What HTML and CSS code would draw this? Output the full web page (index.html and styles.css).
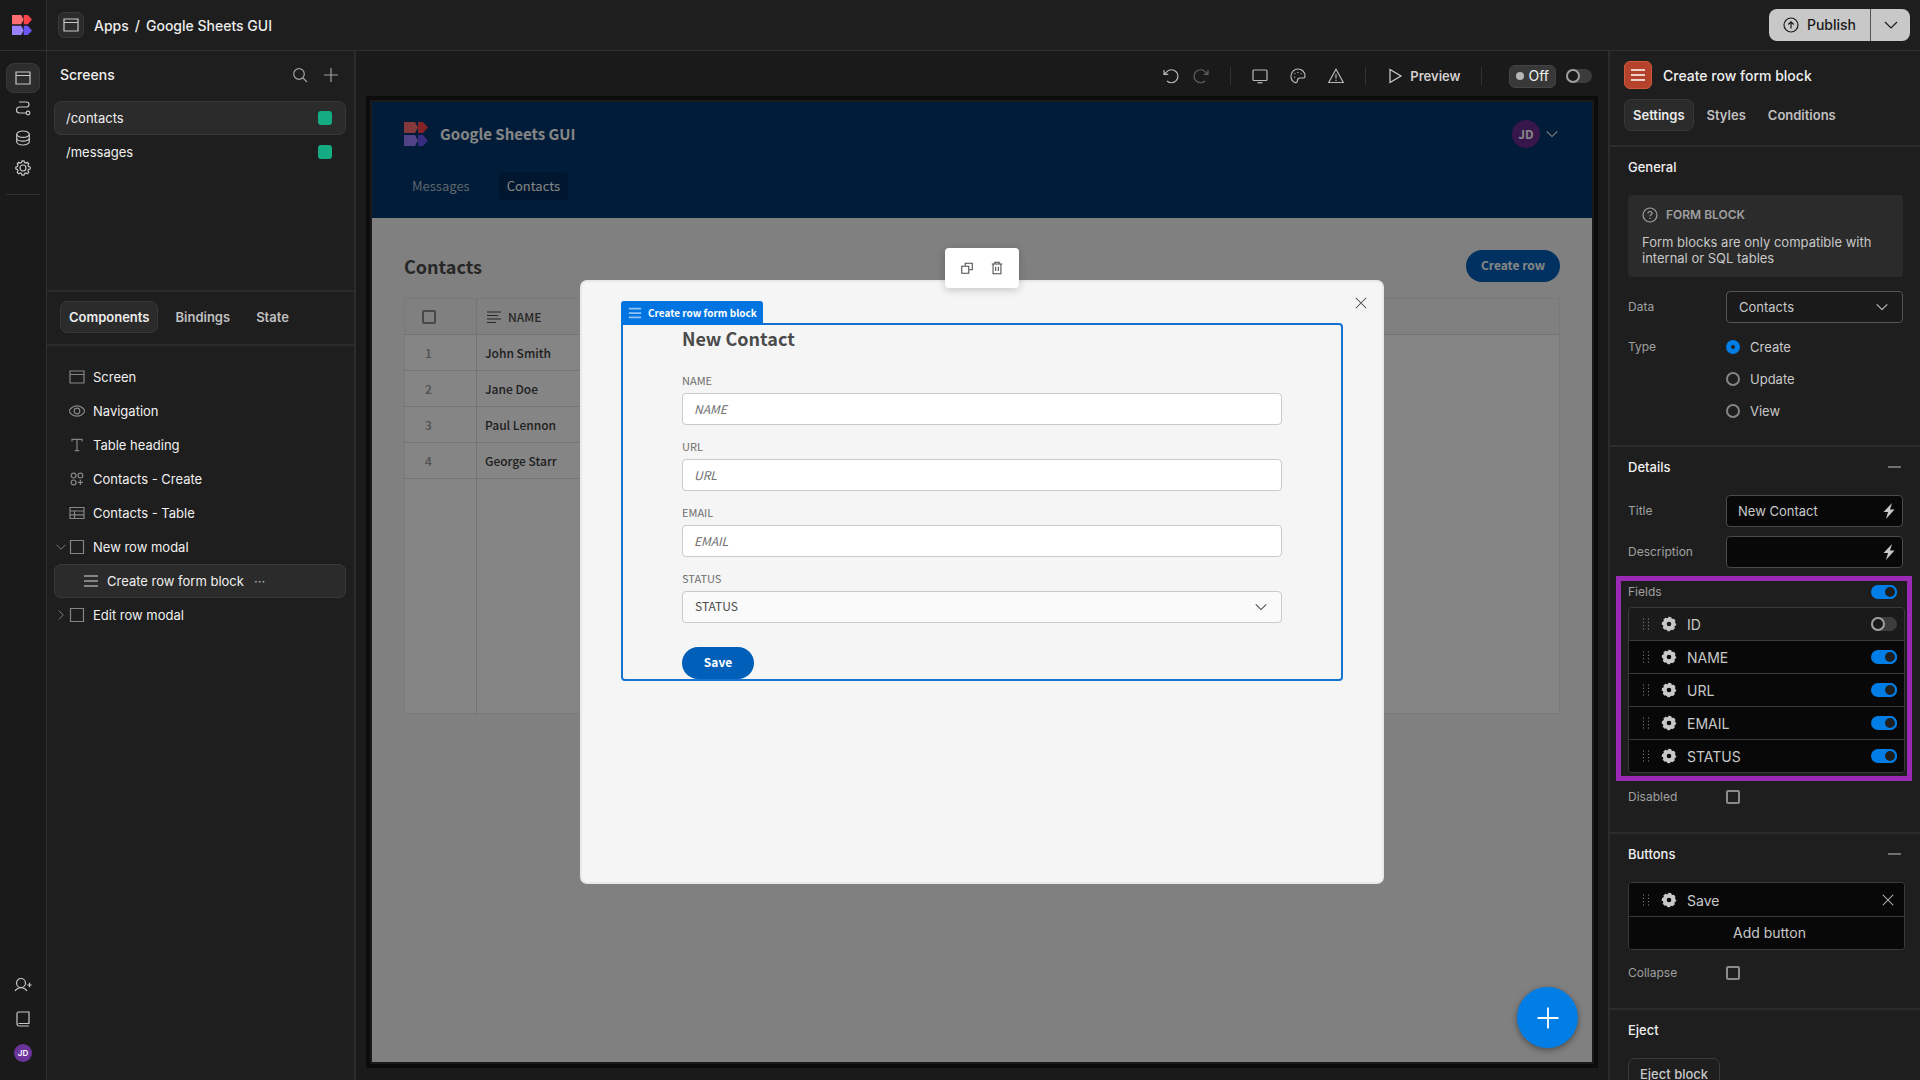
FILE: index.html
```html
<!DOCTYPE html>
<html lang="en">
<head>
<meta charset="utf-8">
<title>Google Sheets GUI - Builder</title>
<link rel="stylesheet" href="styles.css">
</head>
<body>
<svg class="sprite" aria-hidden="true">
  <symbol id="i-logo" viewBox="0 0 24 24">
    <path d="M0 0h11l3 5.500-3 5.500H0z" fill="#ff6d70"/><path d="M14 0h5l5 5.500-5 5.500h-5z" fill="#ff4149"/>
    <path d="M0 13h11l3 5.500-3 5.500H0z" fill="#9981ff"/><path d="M14 13h5l5 5.500-5 5.500h-5z" fill="#6a55f5"/>
  </symbol>
  <symbol id="i-screen" viewBox="0 0 16 16"><path d="M1 2h14v12H1zM1 5.500h14"/></symbol>
  <symbol id="i-flow" viewBox="0 0 16 16"><path d="M4 2h7.500a2.500 2.500 0 0 1 0 5h-7a3 3 0 0 0 0 6h6.500"/><circle cx="13" cy="13" r="1.800"/></symbol>
  <symbol id="i-data" viewBox="0 0 16 16"><ellipse cx="8" cy="4.200" rx="6.300" ry="3.200"/><path d="M1.700 4.200v7.600c0 1.800 2.800 3.200 6.300 3.200s6.300-1.400 6.300-3.200V4.200M1.700 8c0 1.800 2.800 3.200 6.300 3.200s6.300-1.400 6.300-3.200"/></symbol>
  <symbol id="i-gear" viewBox="0 0 16 16"><path d="M6.500 2.600 7 .9h2l.5 1.700 1.300.5 1.500-.8 1.500 1.500-.8 1.500.5 1.300 1.600.4v2l-1.600.5-.5 1.300.8 1.500-1.500 1.500-1.500-.8-1.300.5L9 15.100H7l-.5-1.600-1.300-.5-1.500.8-1.500-1.500.8-1.500-.5-1.300L.9 9V7l1.600-.4L3 5.300l-.8-1.500 1.500-1.500 1.500.8z"/><circle cx="8" cy="8" r="3"/></symbol>
  <symbol id="i-user" viewBox="0 0 18 16"><circle cx="7" cy="6" r="4.500"/><path d="M1 14c1.500-2.200 3.500-3.400 6-3.400s4.500 1.200 6 3.400M15.500 5.800v4.400M13.300 8h4.400"/></symbol>
  <symbol id="i-book" viewBox="0 0 16 16"><path d="M14 15H4a2 2 0 0 1-2-2V2.500C2 1.700 2.700 1 3.500 1H14v11.500H3.500"/></symbol>
  <symbol id="i-search" viewBox="0 0 16 16"><circle cx="7" cy="7" r="5.300"/><path d="m11 11 4 4"/></symbol>
  <symbol id="i-plus" viewBox="0 0 16 16"><path d="M8 1v14M1 8h14"/></symbol>
  <symbol id="i-eye" viewBox="0 0 16 16"><path d="M0 8c2-3.500 4.700-5.200 8-5.200S14 4.500 16 8c-2 3.500-4.700 5.200-8 5.200S2 11.500 0 8z"/><circle cx="8" cy="8" r="2.800"/></symbol>
  <symbol id="i-text" viewBox="0 0 16 16"><path d="M3 4.500V2.300h10v2.200M8 2.300v11.400M5.700 13.700h4.600"/></symbol>
  <symbol id="i-blocks" viewBox="0 0 16 16"><circle cx="4.600" cy="4.600" r="2.400"/><circle cx="11.400" cy="4.600" r="2.400"/><circle cx="4.600" cy="11.400" r="2.400"/><path d="M11.400 8.800v5.200M8.800 11.400H14"/></symbol>
  <symbol id="i-table" viewBox="0 0 16 16"><path d="M1 2.500h14v11H1zM1 6h14M1 9.800h14M5.500 6v7.500"/></symbol>
  <symbol id="i-square" viewBox="0 0 16 16"><path d="M1.500 1.500h13v13h-13z"/></symbol>
  <symbol id="i-down" viewBox="0 0 16 16"><path d="m2 5 6 6 6-6"/></symbol>
  <symbol id="i-right" viewBox="0 0 16 16"><path d="m5 2 6 6-6 6"/></symbol>
  <symbol id="i-lines" viewBox="0 0 16 16"><path d="M1 3h14M1 8h14M1 13h14"/></symbol>
  <symbol id="i-align" viewBox="0 0 16 16"><path d="M1 3h14M1 6.500h11M1 10h14M1 13.500h9"/></symbol>
  <symbol id="i-undo" viewBox="0 0 16 16"><path d="M1 2v4.300h4.300M1.500 6l2.200-2.200A6.500 6.500 0 1 1 4 13"/></symbol>
  <symbol id="i-redo" viewBox="0 0 16 16"><path d="M15 2v4.300h-4.300M14.500 6l-2.200-2.200A6.500 6.500 0 1 0 12 13"/></symbol>
  <symbol id="i-monitor" viewBox="0 0 16 16"><rect x="1" y="2" width="14" height="10.500" rx="1"/><path d="M5.500 14.700h5"/></symbol>
  <symbol id="i-palette" viewBox="0 0 16 16"><path d="M8 1a7 7 0 0 0-7 7c0 3.300 2 5.800 4.300 6.600 1.300.4 2-.5 2-1.500 0-1.900.7-3.100 2.600-3.100h3c1.300 0 2.100-.8 2.100-2.100C15 4 11.900 1 8 1z"/><path d="M8 3.900v1M4.500 5.600l.8.500M11.500 5.600l-.8.500M4.200 9.400h1"/></symbol>
  <symbol id="i-warn" viewBox="0 0 16 16"><path d="M8 1.300 15.300 14.500H.7zM8 6v4.500M8 11.800v1.200"/></symbol>
  <symbol id="i-play" viewBox="0 0 16 16"><path d="M3 1.500 14 8 3 14.500z"/></symbol>
  <symbol id="i-up" viewBox="0 0 16 16"><circle cx="8" cy="8" r="7"/><path d="M8 11.500V5M5.300 7.500 8 4.800l2.700 2.700"/></symbol>
  <symbol id="i-help" viewBox="0 0 16 16"><circle cx="8" cy="8" r="7"/><path d="M6 6.500C6 5.300 6.900 4.500 8 4.500s2 .8 2 1.800c0 1.300-2 1.500-2 3M8 10.800v1.200"/></symbol>
  <symbol id="i-close" viewBox="0 0 16 16"><path d="m2 2 12 12M14 2 2 14"/></symbol>
  <symbol id="i-copy" viewBox="0 0 16 16"><path d="M2 6h8v8H2zM6 6V2.500h8V10h-4"/></symbol>
  <symbol id="i-trash" viewBox="0 0 16 16"><path d="M2 3.500h12M5.500 3.500v-2h5v2M3.500 3.500v11h9v-11M6.500 6.500v5M9.500 6.500v5"/></symbol>
  <symbol id="i-bolt" viewBox="0 0 16 16"><path d="M11 0 2.500 9H7l-2 7 8.500-9.500H9z" fill="currentColor" stroke="none"/></symbol>
  <symbol id="i-cog" viewBox="0 0 16 16"><circle cx="8" cy="8" r="4.300" stroke-width="4"/><circle cx="8" cy="8" r="6.200" stroke-width="2" stroke-dasharray="3 1.870" stroke-dashoffset="1.500"/></symbol>
  <symbol id="i-drag" viewBox="0 0 8 12"><path d="M1 1h1M6 1h1M1 4.300h1M6 4.300h1M1 7.700h1M6 7.700h1M1 11h1M6 11h1"/></symbol>
</svg>

<div class="app">
  <header class="topbar">
    <a class="topbar-logo" href="#" aria-label="Home"><svg class="logo-small"><use href="#i-logo"/></svg></a>
    <div class="topbar-main">
      <span class="crumb-icon"><svg class="icon"><use href="#i-screen"/></svg></span>
      <nav class="crumbs"><a href="#">Apps</a><span>/</span><a href="#">Google Sheets GUI</a></nav>
      <div class="publish">
        <button class="publish-main"><svg class="icon"><use href="#i-up"/></svg>Publish</button>
        <button class="publish-more" aria-label="Publish options"><svg class="icon"><use href="#i-down"/></svg></button>
      </div>
    </div>
  </header>

  <div class="workspace">
    <nav class="rail">
      <button class="rail-item active" aria-label="Design"><svg class="icon"><use href="#i-screen"/></svg></button>
      <button class="rail-item" aria-label="Automations"><svg class="icon"><use href="#i-flow"/></svg></button>
      <button class="rail-item" aria-label="Data"><svg class="icon"><use href="#i-data"/></svg></button>
      <button class="rail-item" aria-label="Settings"><svg class="icon"><use href="#i-gear"/></svg></button>
      <hr class="rail-rule">
      <div class="rail-bottom">
        <button class="rail-item" aria-label="Invite users"><svg class="icon icon-wide"><use href="#i-user"/></svg></button>
        <button class="rail-item" aria-label="Docs"><svg class="icon"><use href="#i-book"/></svg></button>
        <button class="rail-item" aria-label="Account"><span class="rail-avatar">JD</span></button>
      </div>
    </nav>

    <aside class="left">
      <section class="screens">
        <div class="screens-head">
          <h2>Screens</h2>
          <button aria-label="Search"><svg class="icon"><use href="#i-search"/></svg></button>
          <button aria-label="Add screen"><svg class="icon"><use href="#i-plus"/></svg></button>
        </div>
        <a class="screen-row selected" href="#">/contacts<span class="swatch"></span></a>
        <a class="screen-row" href="#">/messages<span class="swatch"></span></a>
      </section>
      <div class="tabs left-tabs">
        <button class="tab active">Components</button>
        <button class="tab">Bindings</button>
        <button class="tab">State</button>
      </div>
      <ul class="tree">
        <li class="node"><span class="twist"></span><svg class="icon"><use href="#i-screen"/></svg>Screen</li>
        <li class="node"><span class="twist"></span><svg class="icon"><use href="#i-eye"/></svg>Navigation</li>
        <li class="node"><span class="twist"></span><svg class="icon"><use href="#i-text"/></svg>Table heading</li>
        <li class="node"><span class="twist"></span><svg class="icon"><use href="#i-blocks"/></svg>Contacts - Create</li>
        <li class="node"><span class="twist"></span><svg class="icon"><use href="#i-table"/></svg>Contacts - Table</li>
        <li class="node"><span class="twist"><svg class="icon icon-12"><use href="#i-down"/></svg></span><svg class="icon"><use href="#i-square"/></svg>New row modal</li>
        <li class="node child selected"><svg class="icon"><use href="#i-lines"/></svg>Create row form block<span class="more">···</span></li>
        <li class="node"><span class="twist"><svg class="icon icon-12"><use href="#i-right"/></svg></span><svg class="icon"><use href="#i-square"/></svg>Edit row modal</li>
      </ul>
    </aside>

    <main class="center">
      <div class="toolbar">
        <button class="tool" aria-label="Undo"><svg class="icon"><use href="#i-undo"/></svg></button>
        <button class="tool faint" aria-label="Redo"><svg class="icon"><use href="#i-redo"/></svg></button>
        <span class="tool-rule"></span>
        <div class="tool-group">
          <button class="tool" aria-label="Desktop"><svg class="icon"><use href="#i-monitor"/></svg></button>
          <button class="tool" aria-label="Theme"><svg class="icon"><use href="#i-palette"/></svg></button>
          <button class="tool" aria-label="Errors"><svg class="icon"><use href="#i-warn"/></svg></button>
        </div>
        <span class="tool-rule"></span>
        <button class="preview"><svg class="icon"><use href="#i-play"/></svg>Preview</button>
        <span class="tool-rule"></span>
        <label class="chip" for="assist"><span class="dot"></span>Off</label>
        <input class="switch" type="checkbox" role="switch" id="assist">
      </div>

      <div class="frame">
        <div class="page">
          <header class="site-head">
            <div class="site-top">
              <svg class="site-logo"><use href="#i-logo"/></svg>
              <h1>Google Sheets GUI</h1>
              <span class="site-user">JD</span>
              <svg class="icon icon-14"><use href="#i-down"/></svg>
            </div>
            <nav class="site-nav"><a href="#">Messages</a><a class="current" href="#">Contacts</a></nav>
          </header>
          <div class="site-body">
            <div class="list-head">
              <h2>Contacts</h2>
              <button class="pill">Create row</button>
            </div>
            <table class="grid">
              <thead>
                <tr><th class="col-num"><input class="tick" type="checkbox" aria-label="Select all"></th><th class="col-name"><span class="th-label"><svg class="icon"><use href="#i-align"/></svg>NAME</span></th><th></th></tr>
              </thead>
              <tbody>
                <tr><td class="num">1</td><td>John Smith</td><td></td></tr>
                <tr><td class="num">2</td><td>Jane Doe</td><td></td></tr>
                <tr><td class="num">3</td><td>Paul Lennon</td><td></td></tr>
                <tr><td class="num">4</td><td>George Starr</td><td></td></tr>
                <tr class="rest"><td></td><td></td><td></td></tr>
              </tbody>
            </table>
          </div>

          <div class="underlay">
            <div class="modal" role="dialog" aria-label="New row modal">
              <button class="modal-close" aria-label="Close"><svg class="icon icon-14"><use href="#i-close"/></svg></button>
              <form class="block">
                <span class="block-tag"><svg class="icon icon-14"><use href="#i-lines"/></svg>Create row form block</span>
                <h2>New Contact</h2>
                <label for="f-name">NAME</label>
                <input type="text" id="f-name" placeholder="NAME">
                <label for="f-url">URL</label>
                <input type="text" id="f-url" placeholder="URL">
                <label for="f-email">EMAIL</label>
                <input type="text" id="f-email" placeholder="EMAIL">
                <label for="f-status">STATUS</label>
                <span class="select"><select id="f-status"><option>STATUS</option></select><svg class="icon icon-14"><use href="#i-down"/></svg></span>
                <button class="pill save" type="button">Save</button>
              </form>
            </div>
          </div>
          <div class="float-tools">
            <button aria-label="Duplicate"><svg class="icon icon-14"><use href="#i-copy"/></svg></button>
            <button aria-label="Delete"><svg class="icon icon-14"><use href="#i-trash"/></svg></button>
          </div>
          <button class="fab" aria-label="Add component"><svg class="icon"><use href="#i-plus"/></svg></button>
        </div>
      </div>
    </main>

    <aside class="right">
      <div class="right-head">
        <div class="right-title"><span class="badge"><svg class="icon"><use href="#i-lines"/></svg></span><h2>Create row form block</h2></div>
        <div class="tabs right-tabs">
          <button class="tab active">Settings</button>
          <button class="tab">Styles</button>
          <button class="tab">Conditions</button>
        </div>
      </div>

      <section class="group">
        <h3>General</h3>
        <div class="note">
          <p class="note-title"><svg class="icon"><use href="#i-help"/></svg>FORM BLOCK</p>
          <p>Form blocks are only compatible with internal or SQL tables</p>
        </div>
        <div class="prop">
          <label for="p-data">Data</label>
          <span class="select"><select id="p-data"><option>Contacts</option></select><svg class="icon icon-14"><use href="#i-down"/></svg></span>
        </div>
        <div class="prop prop-top" role="radiogroup" aria-labelledby="p-type">
          <span id="p-type">Type</span>
          <div class="radios">
            <label><input type="radio" name="type" checked>Create</label>
            <label><input type="radio" name="type">Update</label>
            <label><input type="radio" name="type">View</label>
          </div>
        </div>
      </section>

      <section class="group">
        <h3>Details<span class="minus"></span></h3>
        <div class="prop">
          <label for="p-title">Title</label>
          <span class="binding"><input type="text" id="p-title" value="New Contact"><svg class="icon"><use href="#i-bolt"/></svg></span>
        </div>
        <div class="prop">
          <label for="p-desc">Description</label>
          <span class="binding"><input type="text" id="p-desc"><svg class="icon"><use href="#i-bolt"/></svg></span>
        </div>
        <div class="highlight">
          <div class="fields-head"><label for="s-all">Fields</label><input class="switch" type="checkbox" role="switch" id="s-all" checked></div>
          <ul class="items">
            <li class="off"><svg class="drag"><use href="#i-drag"/></svg><svg class="icon cog"><use href="#i-cog"/></svg><label for="s-id">ID</label><input class="switch" type="checkbox" role="switch" id="s-id"></li>
            <li><svg class="drag"><use href="#i-drag"/></svg><svg class="icon cog"><use href="#i-cog"/></svg><label for="s-name">NAME</label><input class="switch" type="checkbox" role="switch" id="s-name" checked></li>
            <li><svg class="drag"><use href="#i-drag"/></svg><svg class="icon cog"><use href="#i-cog"/></svg><label for="s-url">URL</label><input class="switch" type="checkbox" role="switch" id="s-url" checked></li>
            <li><svg class="drag"><use href="#i-drag"/></svg><svg class="icon cog"><use href="#i-cog"/></svg><label for="s-email">EMAIL</label><input class="switch" type="checkbox" role="switch" id="s-email" checked></li>
            <li><svg class="drag"><use href="#i-drag"/></svg><svg class="icon cog"><use href="#i-cog"/></svg><label for="s-status">STATUS</label><input class="switch" type="checkbox" role="switch" id="s-status" checked></li>
          </ul>
        </div>
        <div class="prop">
          <label for="p-disabled">Disabled</label>
          <input class="tick" type="checkbox" id="p-disabled">
        </div>
      </section>

      <section class="group">
        <h3>Buttons<span class="minus"></span></h3>
        <ul class="items button-items">
          <li><svg class="drag"><use href="#i-drag"/></svg><svg class="icon cog"><use href="#i-cog"/></svg><span class="item-name">Save</span><button class="remove" aria-label="Remove Save"><svg class="icon icon-14"><use href="#i-close"/></svg></button></li>
          <li><button class="add">Add button</button></li>
        </ul>
        <div class="prop">
          <label for="p-collapse">Collapse</label>
          <input class="tick" type="checkbox" id="p-collapse">
        </div>
      </section>

      <section class="group">
        <h3>Eject</h3>
        <button class="eject">Eject block</button>
      </section>
    </aside>
  </div>
</div>
</body>
</html>
```

FILE: styles.css
```css
*, *::before { box-sizing: border-box; }

body {
  margin: 0;
  background: #1a1a1a;
  color: #ececec;
  font: 400 13px/16px Inter, "Liberation Sans", sans-serif;
}

h1, h2, h3, p, ul { margin: 0; padding: 0; list-style: none; }
h1, h2, h3 { font-weight: 500; }
button, input, select { font: inherit; color: inherit; margin: 0; }
button { background: none; border: 0; padding: 0; display: flex; align-items: center; justify-content: center; }
a { color: inherit; text-decoration: none; }

.sprite { position: absolute; width: 0; height: 0; }
.icon { width: 16px; height: 16px; flex: none; fill: none; stroke: currentColor; stroke-width: 1.2; display: block; }
.icon-wide { width: 18px; }
.icon-14 { width: 14px; height: 14px; }
.icon-12 { width: 12px; height: 12px; }

.app { display: flex; flex-direction: column; height: 100vh; overflow: hidden; }

/* Top bar */
.topbar { display: flex; flex: none; height: 51px; background: #1e1e1e; border-bottom: 1px solid #303030; }
.topbar-logo { width: 47px; display: flex; align-items: center; padding-left: 12px; border-right: 1px solid #303030; background: #1a1a1a; }
.logo-small { width: 20px; height: 20px; }
.topbar-main { flex: 1; display: flex; align-items: center; padding: 0 10px 0 11px; }
.crumb-icon { width: 26px; height: 26px; display: grid; place-items: center; background: #2b2b2b; border: 1px solid #383838; border-radius: 6px; color: #c8c8c8; }
.crumbs { display: flex; gap: 6px; margin-left: 10px; padding-top: 2px; font-size: 14px; font-weight: 500; }
.publish { display: flex; margin-left: auto; color: #1a1a1a; font-size: 14px; font-weight: 500; }
.publish-main { height: 32px; padding: 0 14px; gap: 8px; background: #c8c8c8; border-radius: 8px 0 0 8px; border-right: 1px solid #555; }
.publish-more { width: 39px; height: 32px; background: #c8c8c8; border-radius: 0 8px 8px 0; }

.workspace { flex: 1; display: flex; min-height: 0; }

/* Icon rail */
.rail { width: 47px; flex: none; display: flex; flex-direction: column; align-items: center; padding: 12px 0 10px; background: #1a1a1a; border-right: 1px solid #303030; color: #c8c8c8; }
.rail-item { width: 34px; height: 30px; border: 1px solid transparent; border-radius: 8px; }
.rail-item.active { background: #2d2d2d; border-color: #383838; }
.rail-rule { width: 34px; margin: 11px 0 0; border: 0; border-top: 1px solid #303030; }
.rail-bottom { margin-top: auto; }
.rail-bottom .rail-item { height: 34px; }
.rail-avatar { width: 18px; height: 18px; border-radius: 50%; background: #6b349b; color: #fff; font-size: 8px; font-weight: 600; line-height: 18px; text-align: center; }

/* Left panel */
.left { width: 309px; flex: none; background: #1e1e1e; border-right: 2px solid #2b2b2b; }
.screens { height: 241px; padding: 0 8px 0 7px; border-bottom: 2px solid #2b2b2b; }
.screens-head { display: flex; align-items: center; gap: 15px; height: 50px; padding: 0 7px 2px 6px; color: #a0a0a0; }
.screens-head h2 { flex: 1; font-size: 14px; color: #f0f0f0; }
.screen-row { display: flex; align-items: center; height: 34px; padding: 0 13px 0 11px; border: 1px solid transparent; border-radius: 7px; color: #f0f0f0; }
.swatch { width: 14px; height: 14px; margin-left: auto; background: #15ac84; border-radius: 3px; }
.screen-row.selected, .node.selected { background: #2b2b2b; border-color: #383838; }

.tabs { display: flex; align-items: center; gap: 8px; }
.tab { height: 32px; padding: 0 8px; border: 1px solid transparent; border-radius: 7px; font-weight: 600; color: #c0c0c0; }
.tab.active { background: #2b2b2b; border-color: #383838; color: #ececec; }
.left-tabs { height: 54px; padding: 0 13px 2px; border-bottom: 2px solid #2b2b2b; }

.tree { padding: 14px 8px 14px 7px; color: #f0f0f0; }
.node { display: flex; align-items: center; height: 34px; border: 1px solid transparent; border-radius: 7px; }
.node .icon { color: #858585; margin-right: 8px; }
.twist { width: 14px; }
.node.child { padding-left: 28px; }
.node.child .icon { color: #ddd; }
.more { margin-left: 10px; color: #b0b0b0; }

/* Canvas toolbar */
.center { flex: 1; min-width: 0; display: flex; flex-direction: column; padding: 0 10px 12px; background: #1a1a1a; }
.toolbar { display: flex; flex: none; align-items: center; justify-content: flex-end; height: 45px; padding: 5px 6px 0 0; color: #b8b8b8; }
.tool + .tool { margin-left: 14px; }
.faint { color: #606060; }
.tool-rule { width: 1px; height: 18px; margin: 0 21px; background: #333; }
.tool-group { display: flex; gap: 8px; }
.preview { gap: 7px; font-weight: 600; color: #d0d0d0; }
.chip { display: flex; align-items: center; gap: 4px; height: 23px; margin: 0 10px 0 6px; padding: 0 6px; border: 1px solid #444; border-radius: 6px; background: #383838; color: #f0f0f0; font-size: 14px; }
.dot { width: 8px; height: 8px; border-radius: 50%; background: #b5b5b5; }

.switch { appearance: none; flex: none; width: 26px; height: 14px; border-radius: 7px; background: #3c3c3c; }
.switch::before { content: ""; display: block; width: 14px; height: 14px; border: 2px solid #a0a0a0; border-radius: 50%; background: #1a1a1a; }
.switch:checked { background: #007ee5; }
.switch:checked::before { margin-left: 12px; border-color: #007ee5; background: #1e1e1e; }

/* Page being designed */
.frame { flex: 1; min-height: 0; padding: 2px; border: 4px solid #0c0c0c; }
.page { position: relative; height: 100%; overflow: hidden; background: #f5f5f5; color: #4b4b4b; font-family: "Noto Sans CJK SC", "Noto Sans CJK JP", sans-serif; }
.site-head { height: 116px; padding: 14px 32px 18px; background: #00366c; display: flex; flex-direction: column; justify-content: space-between; }
.site-top { display: flex; align-items: center; height: 36px; color: #fff; }
.site-logo { width: 24px; height: 24px; }
.site-top h1 { margin: 0 auto 0 12px; font-size: 15px; font-weight: 700; line-height: 24px; }
.site-user { width: 28px; height: 28px; margin-right: 5px; border-radius: 50%; background: #6a2c91; font-size: 12px; font-weight: 700; line-height: 28px; text-align: center; }
.site-top .icon { margin-right: 1px; }
.site-nav { display: flex; gap: 21px; color: #b5c1cf; font-size: 13px; line-height: 28px; }
.site-nav a { padding: 0 8px; border-radius: 4px; }
.site-nav .current { background: #002d5a; color: #fff; }

.site-body { padding: 32px; }
.list-head { display: flex; align-items: center; justify-content: space-between; height: 32px; margin-bottom: 16px; }
.page h2 { font-size: 18px; font-weight: 700; line-height: 26px; }
.pill { height: 32px; padding: 0 15px 2px; border-radius: 16px; background: #005fb9; color: #fff; font-size: 12px; font-weight: 700; }

.grid { width: 100%; table-layout: fixed; border-collapse: collapse; border: 1px solid #e8e8e8; background: #fff; font-size: 12px; font-weight: 500; line-height: 20px; color: #3c3c3c; }
.grid th, .grid td { height: 36px; padding: 0 8px; text-align: left; }
.grid th { font-weight: 500; background: #f6f6f6; border-bottom: 1px solid #dfdfdf; }
.grid td:first-child, .grid th:first-child { border-right: 1px solid #dfdfdf; }
.grid td:nth-child(-n+2) { border-bottom: 1px solid #dfdfdf; }
.grid .rest td { height: 235px; border-bottom: 0; }
.col-num { width: 72px; }
.col-name { width: 200px; }
.grid .col-name { padding-left: 9px; }
.col-num .tick { margin-left: 9px; }
.grid .num { padding: 0 32px 0 8px; text-align: center; color: #9a9a9a; }
.th-label { display: flex; align-items: center; gap: 6px; color: #4b4b4b; }

.tick { appearance: none; flex: none; display: block; width: 14px; height: 14px; border: 2px solid #8a8a8a; border-radius: 2px; }

.underlay { position: absolute; inset: 0; display: flex; align-items: center; justify-content: center; background: rgba(0, 0, 0, 0.48); }
.modal { position: relative; width: 804px; max-width: 90%; min-height: 604px; padding: 41px 39px; border: 2px solid #e8e8e8; border-radius: 7px; background: #f5f5f5; }
.modal-close { position: absolute; top: 14px; right: 14px; }

.block { position: relative; display: flex; flex-direction: column; padding: 0 59px; border: 2px solid #1473d1; border-radius: 0 4px 4px 4px; }
.block-tag { position: absolute; left: -2px; bottom: 100%; display: flex; align-items: center; gap: 6px; height: 24px; padding: 0 6px 0 7px; border-radius: 3px 3px 0 0; background: #0074e0; color: #fff; font-size: 10px; font-weight: 700; white-space: nowrap; }
.block-tag .icon { stroke-width: 2; color: #8fc2f5; }
.block h2 { margin-bottom: 22px; }
.block label { height: 20px; font-size: 11px; line-height: 14px; color: #6e6e6e; }
.block input, .block select { width: 100%; height: 32px; padding: 0 11px 2px; border: 1px solid #cacaca; border-radius: 4px; background: #fff; font-size: 12px; }
.block input { margin-bottom: 14px; }
.block input::placeholder { color: #6e6e6e; font-style: italic; opacity: 1; }
.select { position: relative; display: block; }
.select select { appearance: none; display: block; }
.select .icon { position: absolute; top: 50%; right: 14px; margin-top: -7px; }
.block select { padding-left: 12px; background: #fafafa; }
.save { align-self: flex-start; width: 72px; margin-top: 24px; }

.float-tools { position: absolute; left: 50%; top: 146px; display: flex; align-items: center; justify-content: center; gap: 16px; width: 74px; height: 40px; margin-left: -37px; border-radius: 4px; background: #fff; box-shadow: 0 2px 8px rgba(0, 0, 0, 0.2); }
.fab { position: absolute; right: 14px; bottom: 14px; width: 61px; height: 61px; border-radius: 50%; background: #007ee5; color: #fff; box-shadow: 0 2px 6px rgba(0, 0, 0, 0.4); }
.fab .icon { width: 24px; height: 24px; }

/* Settings panel */
.right { width: 312px; flex: none; overflow: hidden; background: #1e1e1e; border-left: 2px solid #2b2b2b; color: #c8c8c8; }
.right-head { padding: 10px 14px 14px; border-bottom: 2px solid #2b2b2b; }
.right-title { display: flex; align-items: center; gap: 11px; height: 28px; margin-bottom: 10px; }
.right-title h2 { padding-top: 2px; font-size: 14px; color: #f0f0f0; }
.badge { width: 28px; height: 28px; display: grid; place-items: center; border: 1px solid #d0583c; border-radius: 6px; background: #b5422b; color: #fff; }
.badge .icon { stroke-width: 1.6; }
.right-tabs { gap: 4px; }

.group { padding: 8px 17px 10px 18px; border-bottom: 2px solid #2b2b2b; }
.group h3 { display: flex; align-items: center; justify-content: space-between; height: 24px; margin-bottom: 16px; color: #f0f0f0; font-size: 13px; }
.minus { width: 13px; height: 2px; margin-right: 2px; background: #707070; }
.note { padding: 12px 14px 11px; margin-bottom: 14px; border-radius: 4px; background: #2b2b2b; }
.note p { color: #c8c8c8; }
.note .note-title { display: flex; align-items: center; gap: 8px; margin-bottom: 11px; font-size: 12px; font-weight: 600; color: #a0a0a0; }
.prop { display: grid; grid-template-columns: 98px 1fr; align-items: center; min-height: 32px; margin-bottom: 9px; }
.prop > label, .prop > span:first-child { font-size: 12px; color: #a0a0a0; }
.prop-top { align-items: start; margin-bottom: 16px; padding-top: 7px; }
.radios { display: flex; flex-direction: column; gap: 16px; }
.radios label { display: flex; align-items: center; gap: 10px; }
.radios input { appearance: none; width: 14px; height: 14px; border: 2px solid #858585; border-radius: 50%; }
.radios input:checked { border: 5px solid #007ee5; }
.right select, .binding input { width: 100%; height: 32px; padding: 0 11px; border: 1px solid #4a4a4a; border-radius: 4px; background: #1a1a1a; color: #c8c8c8; }
.right select { padding-left: 12px; border-color: #555; }
.binding { position: relative; display: block; }
.binding input { display: block; background: #080808; }
.binding .icon { position: absolute; top: 8px; right: 6px; }

.highlight { margin: -1px -9px 0 -12px; padding: 2px 2px 3px 7px; border: 5px solid #9a29b3; }
.fields-head { display: flex; align-items: center; justify-content: space-between; height: 18px; margin-bottom: 6px; padding-right: 8px; font-size: 12px; color: #a0a0a0; }
.items { border: 1px solid #3a3a3a; border-radius: 4px; overflow: hidden; font-size: 14px; }
.button-items { margin: 0 -2px 7px 0; }
.items li { display: flex; align-items: center; height: 33px; padding: 0 7px 0 13px; background: #080808; }
.items li + li { border-top: 1px solid #3a3a3a; }
.items .off { background: #1a1a1a; height: 32px; }
.drag { width: 8px; height: 12px; margin-right: 11px; stroke: #909090; stroke-width: 1; }
.cog { margin-right: 10px; }
.items label, .item-name { flex: 1; padding-top: 2px; }
.remove { padding-right: 2px; }
.items .add { flex: 1; }

.eject { height: 32px; padding: 0 11px; border: 1px solid #3a3a3a; border-radius: 7px; font-weight: 500; }
```
